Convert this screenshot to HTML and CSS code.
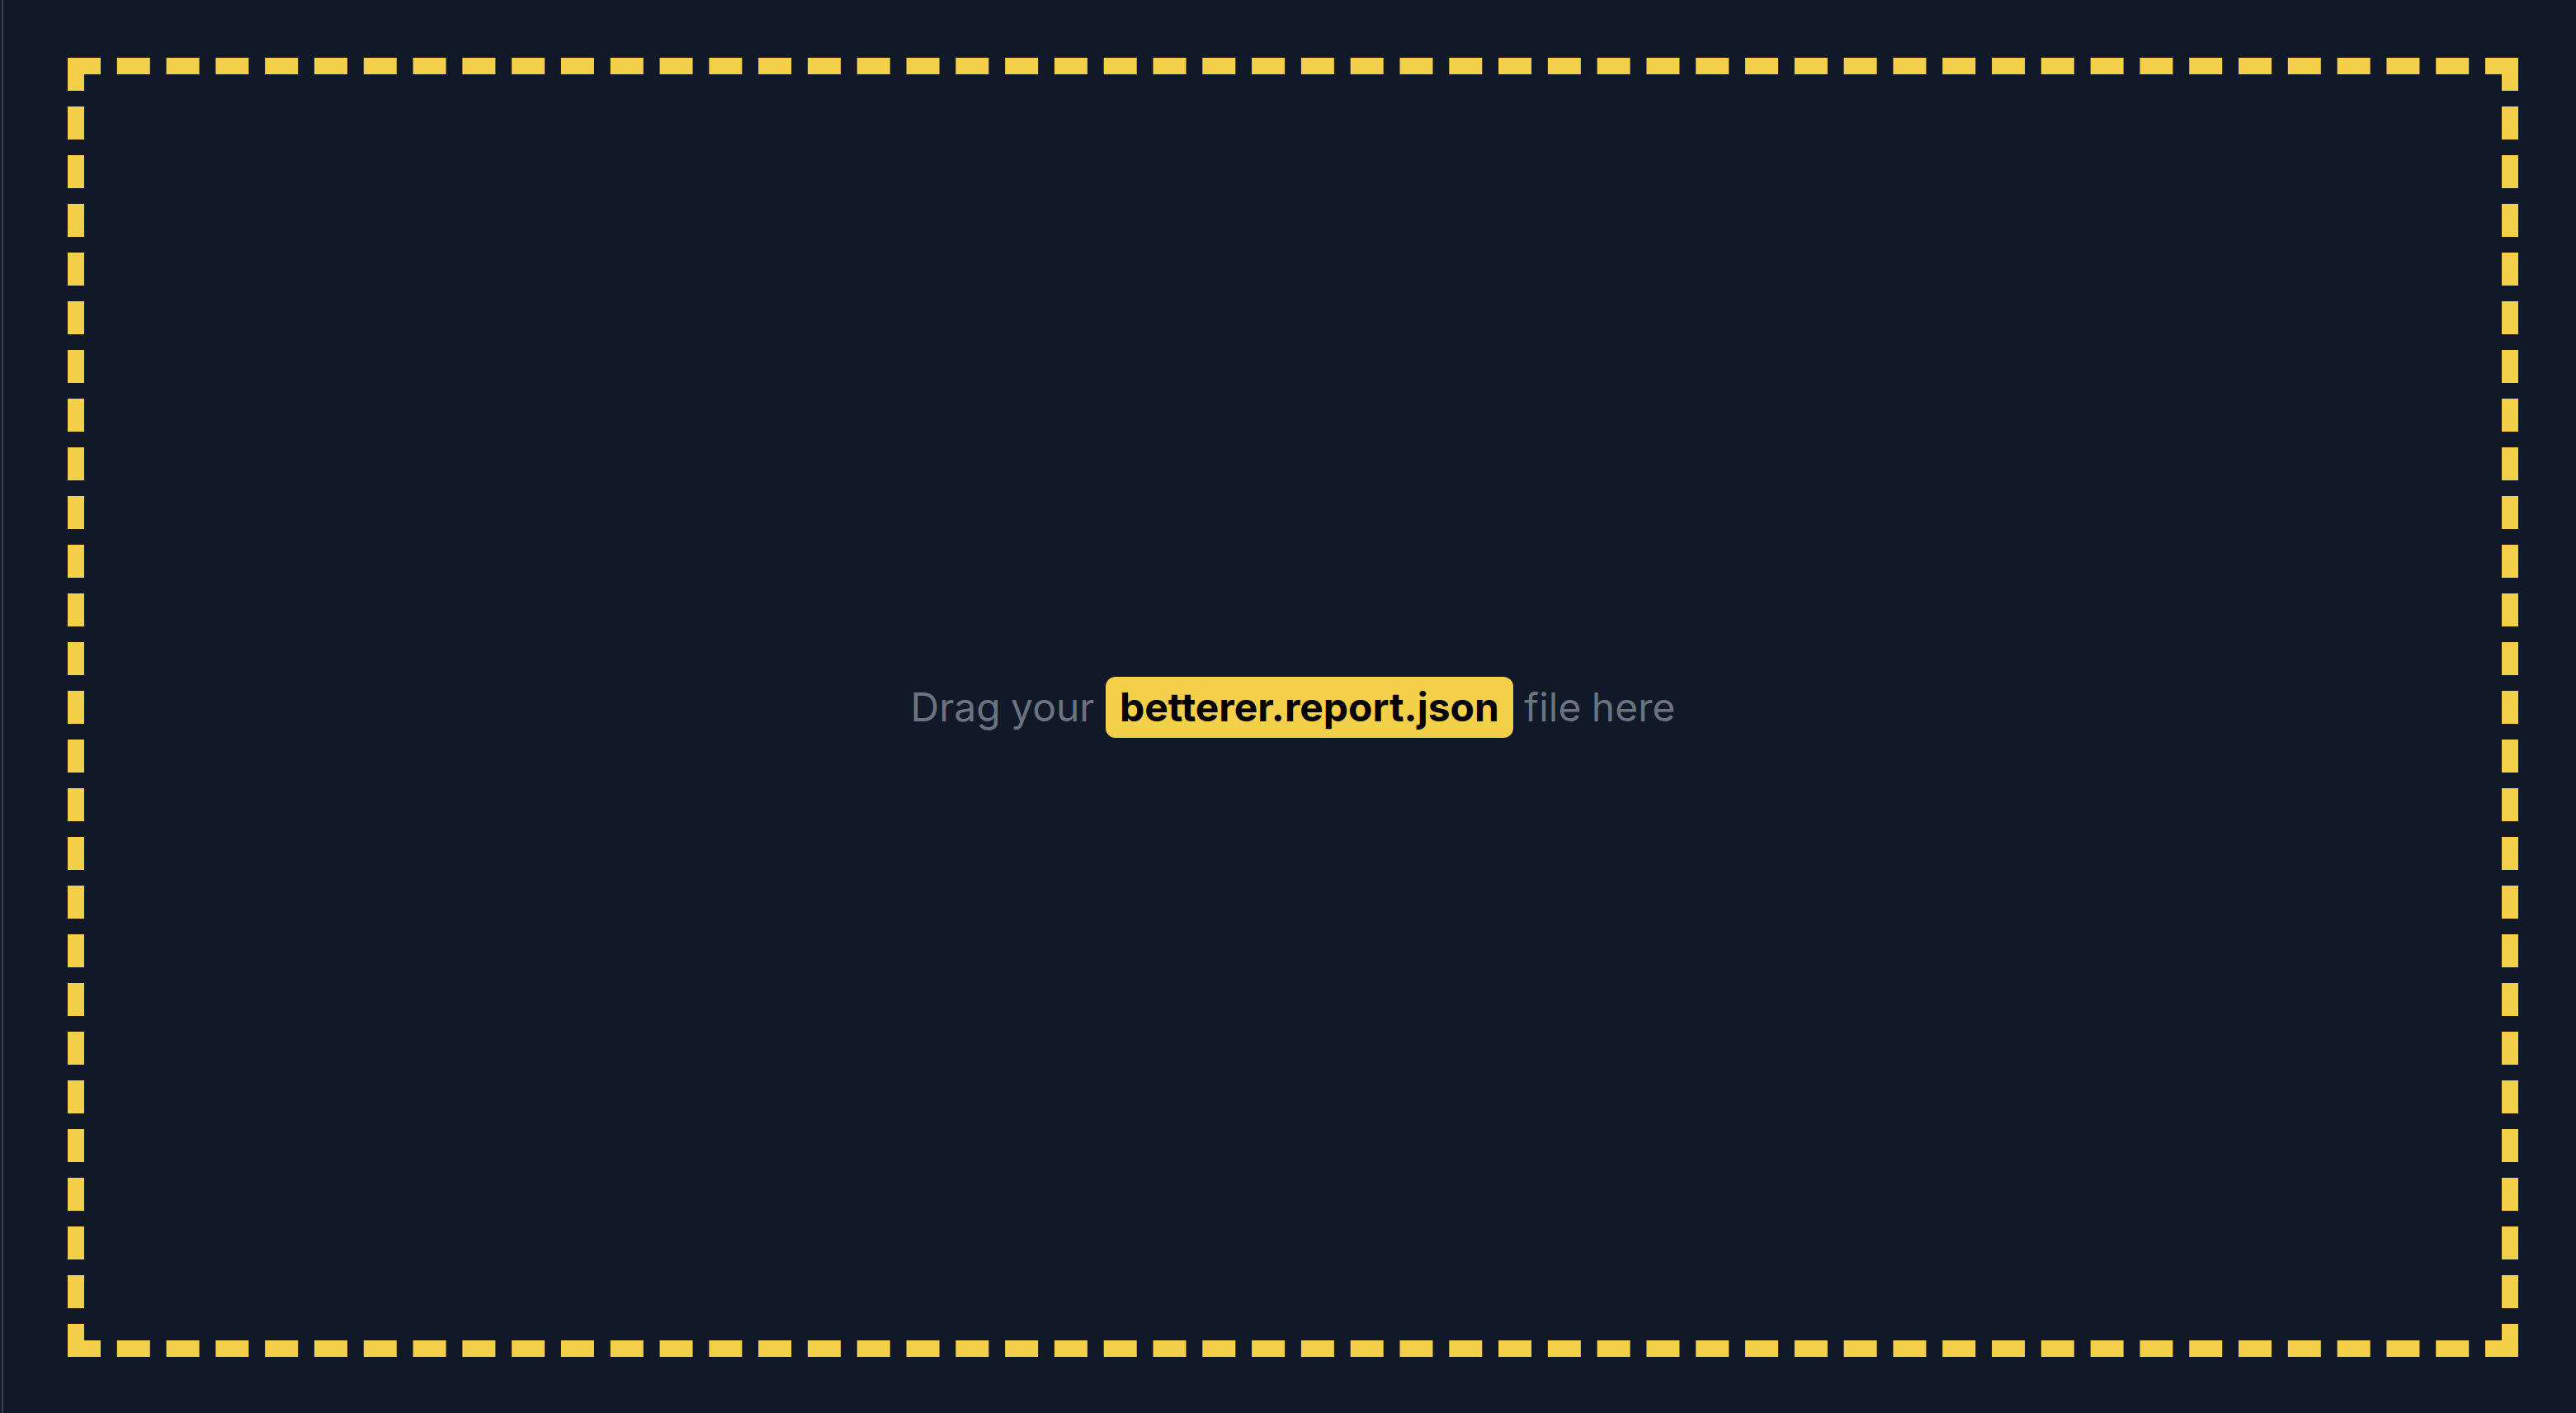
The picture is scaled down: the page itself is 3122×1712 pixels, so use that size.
FILE: index.html
```html
<!DOCTYPE html>
<html lang="en">
<head>
<meta charset="utf-8">
<title>Betterer</title>
<link rel="stylesheet" href="styles.css">
</head>
<body>
<div class="frame">
  <div class="dropzone">
    <p class="prompt">Drag your <code class="file">betterer.report.json</code> file here</p>
  </div>
</div>
</body>
</html>
```
FILE: styles.css
```css
html, body {
  margin: 0;
  padding: 0;
  height: 100%;
  background: #111827;
}
body {
  font-family: Inter, "Noto Sans", "Liberation Sans", sans-serif;
  overflow: hidden;
}
.frame {
  box-sizing: border-box;
  height: 100%;
  margin-left: 2px;
  border-left: 2px solid #3b4049;
  padding: 70px 70px 68px 78px;
  display: flex;
}
.dropzone {
  flex: 1;
  box-sizing: border-box;
  border: 20px dashed #f3cf4a;
  display: flex;
  align-items: center;
  justify-content: center;
}
.prompt {
  margin: 0;
  font-size: 48px;
  line-height: 58px;
  color: #6b7280;
  white-space: nowrap;
  word-spacing: -1px;
}
.file {
  display: inline-block;
  font-family: Inter, "Noto Sans", "Liberation Sans", sans-serif;
  font-size: 48px;
  font-weight: 700;
  color: #000;
  background: #f3cf4a;
  padding: 8px 17px;
  border-radius: 12px;
  margin: 0 1px;
  line-height: 58px;
}
```
